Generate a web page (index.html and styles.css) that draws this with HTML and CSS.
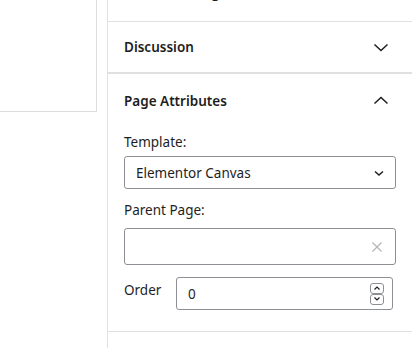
FILE: index.html
```html
<!DOCTYPE html>
<html>
<head>
<meta charset="utf-8">
<link rel="stylesheet" href="styles.css">
</head>
<body>
<div class="layout">
  <div class="main">
    <div class="box"></div>
  </div>
  <div class="sidebar">
    <div class="panel-top"><span class="top-title">Featured image</span></div>
    <div class="panel">
      <div class="panel-head">
        <span class="title">Discussion</span>
        <svg class="chev" width="24" height="24" viewBox="0 0 24 24"><path d="M5.5 9.5 L12 15.5 L18.5 9.5" fill="none" stroke="#1e1e1e" stroke-width="1.5"/></svg>
      </div>
    </div>
    <div class="panel open">
      <div class="panel-head tall">
        <span class="title">Page Attributes</span>
        <svg class="chev" width="24" height="24" viewBox="0 0 24 24"><path d="M5.5 14.5 L12 8.5 L18.5 14.5" fill="none" stroke="#1e1e1e" stroke-width="1.5"/></svg>
      </div>
      <div class="panel-body">
        <div class="label">Template:</div>
        <div class="select">
          <span>Elementor Canvas</span>
          <svg width="12" height="12" viewBox="0 0 12 12"><path d="M2 4.5 L6 8 L10 4.5" fill="none" stroke="#1e1e1e" stroke-width="1.5"/></svg>
        </div>
        <div class="label label-gap">Parent Page:</div>
        <div class="combo">
          <svg width="12" height="12" viewBox="0 0 12 12"><path d="M1.5 1.5 L10.5 10.5 M10.5 1.5 L1.5 10.5" fill="none" stroke="#b4b4b4" stroke-width="1.2"/></svg>
        </div>
        <div class="order-row">
          <span class="order-label">Order</span>
          <div class="number">
            <span>0</span>
            <div class="spin">
              <div class="spin-btn"><svg width="8" height="6" viewBox="0 0 8 6"><path d="M1.5 4.5 L4 2 L6.5 4.5" fill="none" stroke="#1e1e1e" stroke-width="1.2"/></svg></div>
              <div class="spin-btn"><svg width="8" height="6" viewBox="0 0 8 6"><path d="M1.5 1.5 L4 4 L6.5 1.5" fill="none" stroke="#1e1e1e" stroke-width="1.2"/></svg></div>
            </div>
          </div>
        </div>
      </div>
    </div>
  </div>
</div>
</body>
</html>
```

FILE: styles.css
```css
* { box-sizing: border-box; }
html, body { margin: 0; padding: 0; background: #fff; }
body {
  font-family: "Noto Sans", "Open Sans", sans-serif;
  font-size: 13.5px;
  color: #1e1e1e;
}
.layout { display: flex; height: 348px; overflow: hidden; }
.main { width: 107px; flex: none; }
.box {
  width: 97px;
  height: 112px;
  border-right: 1px solid #dcdcde;
  border-bottom: 1px solid #dcdcde;
}
.sidebar { flex: 1; border-left: 1px solid #e0e0e0; }
.panel-top {
  height: 22px;
  border-bottom: 1px solid #e0e0e0;
  overflow: hidden;
  padding-left: 16px;
}
.top-title {
  display: block;
  font-weight: 600;
  line-height: 18px;
  margin-top: -16px;
}
.panel { border-bottom: 1px solid #e0e0e0; }
.panel.open { border-top: 1px solid #e0e0e0; }
.panel-head {
  height: 50px;
  display: flex;
  align-items: center;
  justify-content: space-between;
  padding: 0 19px 0 16px;
}
.panel-head.tall { height: 52px; padding-top: 2px; }
.title { font-weight: 600; font-size: 13.5px; }
.chev { display: block; }
.panel-body { padding: 7px 16px 21px 16px; }
.label { line-height: 18px; }
.label-gap { margin-top: 12px; }
.select {
  margin-top: 5px;
  height: 33px;
  border: 1px solid #8c8f94;
  border-radius: 3px;
  display: flex;
  align-items: center;
  justify-content: space-between;
  padding: 0 10px 0 11px;
}
.select svg { display: block; }
.combo {
  margin-top: 9px;
  height: 37px;
  border: 1px solid #8c8f94;
  border-radius: 3px;
  display: flex;
  align-items: center;
  justify-content: flex-end;
  padding-right: 12px;
}
.combo svg { display: block; }
.order-row {
  margin-top: 12px;
  display: flex;
  align-items: flex-start;
}
.order-label { width: 52px; line-height: 18px; margin-top: 4px; }
.number {
  width: 217px;
  height: 33px;
  border: 1px solid #8c8f94;
  border-radius: 3px;
  display: flex;
  align-items: center;
  justify-content: space-between;
  padding: 0 8px 0 11px;
}
.spin { display: flex; flex-direction: column; }
.spin-btn {
  width: 14px;
  height: 11px;
  border: 1px solid #8c8f94;
  border-radius: 3px;
  display: flex;
  align-items: center;
  justify-content: center;
}
.spin-btn svg { display: block; }
```
